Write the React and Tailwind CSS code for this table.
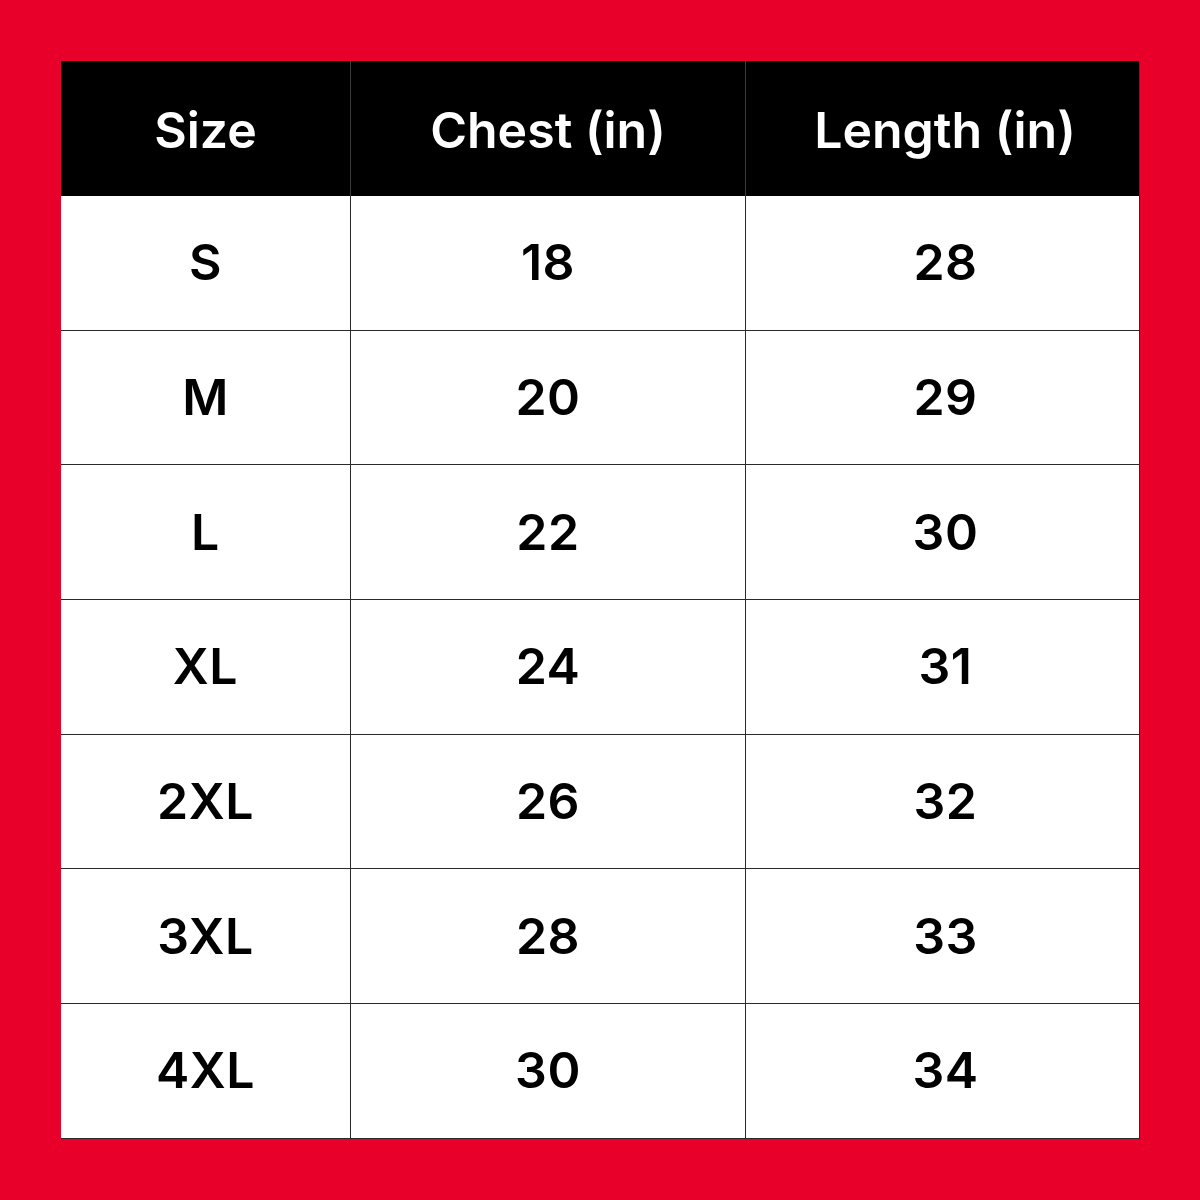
import React from "react";

const rows = [
  ["S", "18", "28"],
  ["M", "20", "29"],
  ["L", "22", "30"],
  ["XL", "24", "31"],
  ["2XL", "26", "32"],
  ["3XL", "28", "33"],
  ["4XL", "30", "34"],
];

export default function App() {
  return (
    <div className="w-[1200px] h-[1200px] bg-[#e9002a] pl-[61px] pt-[61px] font-['Inter',sans-serif]">
      <div className="w-[1079px] grid grid-cols-[290px_395px_394px]">
        {/* header */}
        <div className="h-[135px] pt-[3px] bg-black border-r border-[#3a3a3a] flex items-center justify-center text-white text-[50px] font-semibold">
          Size
        </div>
        <div className="h-[135px] pt-[3px] bg-black border-r border-[#3a3a3a] flex items-center justify-center text-white text-[50px] font-semibold">
          Chest (in)
        </div>
        <div className="h-[135px] pt-[3px] pl-[5px] bg-black border-r border-[#3a3a3a] flex items-center justify-center text-white text-[50px] font-semibold">
          Length (in)
        </div>
        {rows.map((row, i) =>
          row.map((cell, j) => (
            <div
              key={i + "-" + j}
              className={
                "h-[134.7px] bg-white border-r border-b border-[#2a2a2a] flex items-center justify-center text-black text-[50px] font-semibold tracking-[0.5px]" +
                (j === 2 ? " pl-[6px]" : "")
              }
            >
              {cell}
            </div>
          ))
        )}
      </div>
    </div>
  );
}
